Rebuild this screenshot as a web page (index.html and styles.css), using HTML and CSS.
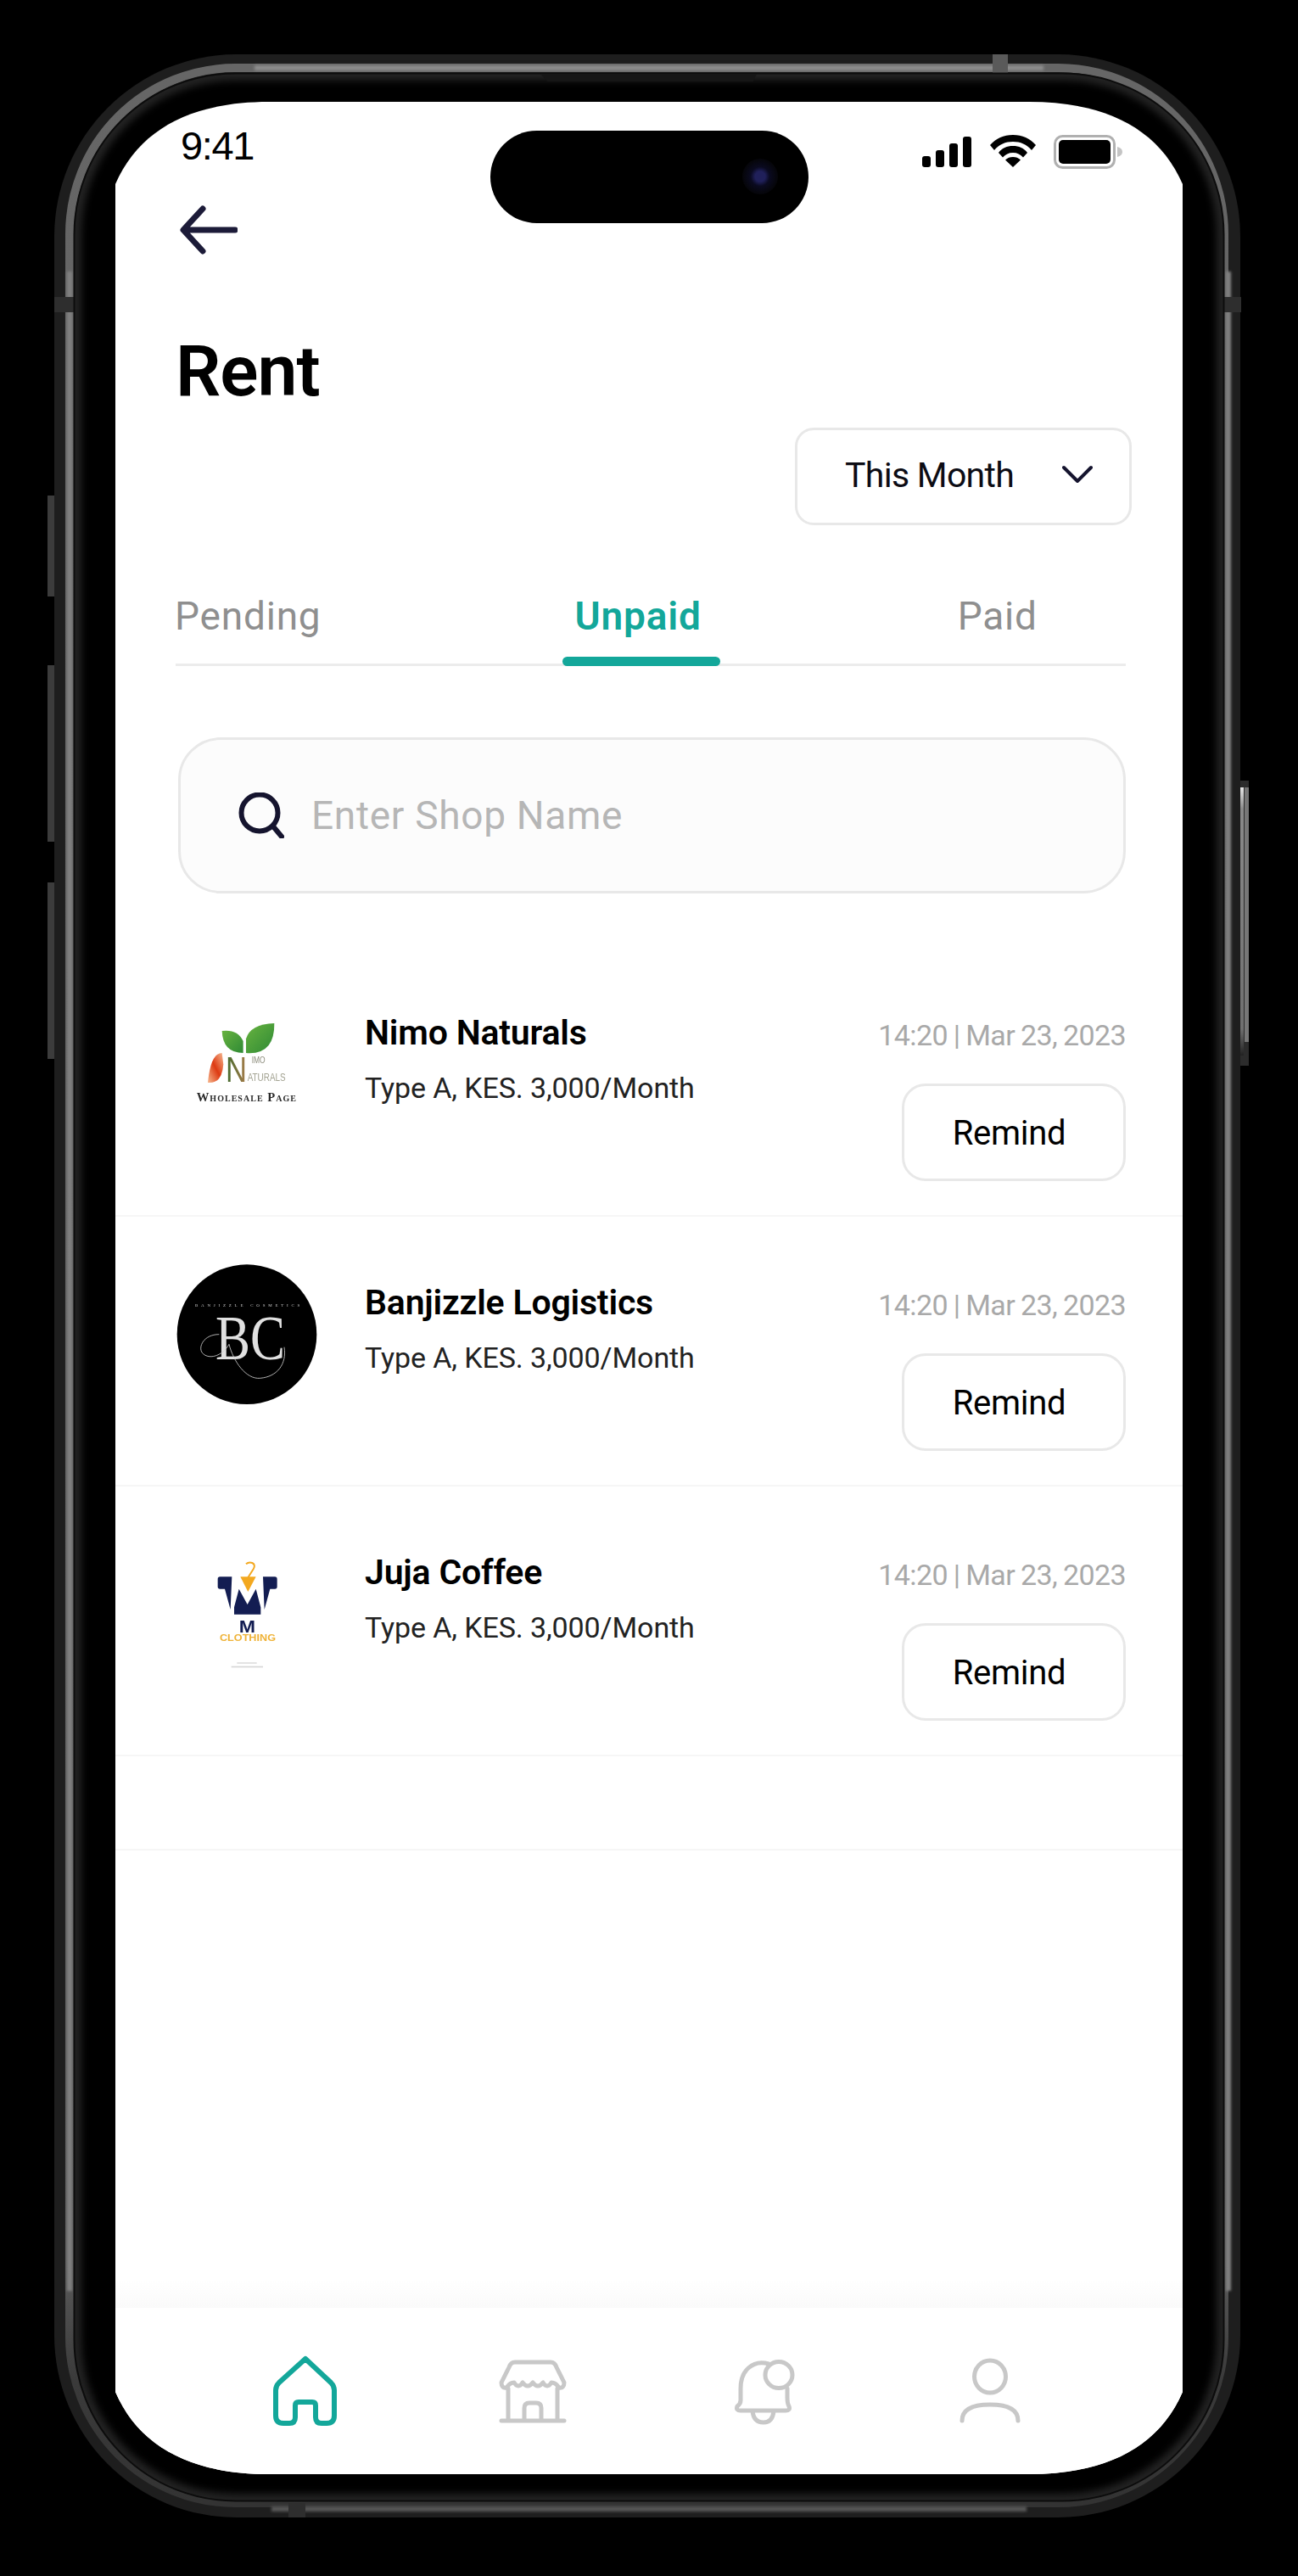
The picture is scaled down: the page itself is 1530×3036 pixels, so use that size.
FILE: index.html
```html
<!DOCTYPE html>
<html lang="en">
<head>
<meta charset="utf-8">
<title>Rent</title>
<link rel="stylesheet" href="styles.css">
</head>
<body>
<svg class="device" viewBox="0 0 1530 3036" aria-hidden="true">
  <defs>
    <filter id="soft" x="-5%" y="-5%" width="110%" height="110%"><feGaussianBlur stdDeviation="1.6"/></filter>
    <filter id="glow" x="-5%" y="-5%" width="110%" height="110%"><feGaussianBlur stdDeviation="4"/></filter>
    <linearGradient id="btn" x1="0" y1="0" x2="0" y2="1">
      <stop offset="0" stop-color="#e8e8e8"/><stop offset=".08" stop-color="#8a8a8a"/><stop offset=".9" stop-color="#707070"/><stop offset="1" stop-color="#222"/>
    </linearGradient>
    <linearGradient id="rail" x1="0" y1="0" x2="0" y2="1">
      <stop offset="0" stop-color="#666"/><stop offset=".9" stop-color="#5c5c5c"/><stop offset=".95" stop-color="#3a3a3a"/><stop offset="1" stop-color="#333"/>
    </linearGradient>
  </defs>
  <g class="buttons">
    <rect x="56" y="584" width="14" height="119" fill="#3c3c3c"/><rect x="64" y="591" width="6" height="100" fill="url(#btn)"/>
    <rect x="56" y="784" width="14" height="208" fill="#3c3c3c"/><rect x="64" y="790" width="6" height="190" fill="url(#btn)"/>
    <rect x="56" y="1040" width="14" height="208" fill="#3c3c3c"/><rect x="64" y="1046" width="6" height="190" fill="url(#btn)"/>
    <rect x="1458" y="920" width="14" height="336" fill="#2c2c2c"/><rect x="1460" y="928" width="6" height="316" fill="url(#btn)"/><rect x="1467" y="928" width="5" height="300" fill="#777"/>
  </g>
  <rect x="64" y="64" width="1398" height="2903" rx="215" fill="#1e1e1e"/>
  <rect x="82" y="80" width="1361" height="2870" rx="196" fill="none" stroke="url(#rail)" stroke-width="10"/>
  <g filter="url(#soft)" stroke-width="6" fill="none">
    <path d="M300 80H1230" stroke="#8c8c8c"/>
    <path d="M82 320V2700" stroke="#808080"/>
    <path d="M1448 320V2700" stroke="#808080"/>
    <path d="M320 2957H1210" stroke="#575757"/>
  </g>
  <g fill="#2e2e2e">
    <rect x="1170" y="64" width="18" height="23" fill="#5a5a5a"/>
    <rect x="64" y="350" width="24" height="18"/>
    <rect x="1442" y="350" width="21" height="18"/>
    <rect x="340" y="2950" width="20" height="17"/>
  </g>
  <rect x="87.500" y="86.500" width="1355" height="2861" rx="190" fill="#222" stroke="#0c0c0c" stroke-width="2"/>
  <rect x="96" y="95" width="1338" height="2844" rx="182" fill="#000" filter="url(#glow)"/>
  <path d="M637 87H892L888 96H645Z" fill="#161616"/>
</svg>

<main class="screen">
  <div class="island"><span class="lens"></span></div>

  <header class="status">
    <span class="clock">9:41</span>
    <div class="status-icons">
      <svg class="ic-signal" viewBox="0 0 58 36"><rect x="0" y="23" width="10" height="13" rx="3"/><rect x="16" y="16" width="10" height="20" rx="3"/><rect x="32" y="8" width="10" height="28" rx="3"/><rect x="48" y="0" width="10" height="36" rx="3"/></svg>
      <svg class="ic-wifi" viewBox="0 0 54 38"><path d="M27 0C16 0 7 4 0 12l5 6C11 11 18 8 27 8s16 3 22 10l5-6C47 4 38 0 27 0Z"/><path d="M27 13c-7 0-13 2.500-17 8l5 5.500C18 23 22 21 27 21s9 2 12 5.500l5-5.500C40 15.500 34 13 27 13Z"/><path d="M27 26c-3.500 0-6.500 1-9 3.500L27 38l9-8.500C33.500 27 30.500 26 27 26Z"/></svg>
      <svg class="ic-battery" viewBox="0 0 82 40"><rect x="1.500" y="1.500" width="70" height="37" rx="9" fill="#fff" stroke="#b0b0b0" stroke-width="3"/><rect x="6" y="6" width="61" height="28" rx="5"/><path d="M75 14c4 1 6 3 6 6s-2 5-6 6Z" fill="#c4c4c4"/></svg>
    </div>
  </header>

  <section class="head">
    <svg class="ic-back" viewBox="0 0 68 58" fill="none"><path d="M65 29H5M27 4 4 29l23 25" stroke="#1c1b38" stroke-width="7" stroke-linecap="round" stroke-linejoin="round"/></svg>
    <h1 class="title">Rent</h1>
    <div class="filter-row">
      <div class="filter">
        <span class="filter-label">This Month</span>
        <svg class="ic-chev" viewBox="0 0 36 22" fill="none"><path d="M2 3l16 16L34 3" stroke="#15142e" stroke-width="4" stroke-linecap="round" stroke-linejoin="round"/></svg>
      </div>
    </div>
    <nav class="tabs">
      <span class="tab tab-pending">Pending</span>
      <span class="tab tab-unpaid">Unpaid</span>
      <span class="tab tab-paid">Paid</span>
    </nav>
    <div class="search">
      <svg class="ic-search" viewBox="0 0 54 54" fill="none"><circle cx="25" cy="24" r="21.500" stroke="#15142e" stroke-width="6"/><path d="M41 40l10 12" stroke="#15142e" stroke-width="6" stroke-linecap="round"/></svg>
      <span class="placeholder">Enter Shop Name</span>
    </div>
  </section>

  <section class="rows">
    <article class="row">
      <svg class="logo" viewBox="0 0 170 170">
        <defs>
          <linearGradient id="leaf" x1="0" y1="0" x2="1" y2="1"><stop offset="0" stop-color="#68b33f"/><stop offset="1" stop-color="#2f8a35"/></linearGradient>
          <linearGradient id="red" x1="1" y1="0" x2="0" y2="1"><stop offset="0" stop-color="#f6bb93"/><stop offset=".5" stop-color="#dd3a12"/><stop offset="1" stop-color="#f7b98f"/></linearGradient>
          <linearGradient id="en" x1="0" y1="0" x2="1" y2="0"><stop offset="0" stop-color="#3f6a2c"/><stop offset="1" stop-color="#a97c4a"/></linearGradient>
        </defs>
        <g transform="translate(-27 -10) scale(.3333)">
          <path d="M245 162Q300 155 320 198V240Q248 240 245 162Z" fill="url(#leaf)"/>
          <path d="M430 135Q345 138 330 190V240Q432 248 430 135Z" fill="url(#leaf)"/>
          <path d="M245 240Q205 240 195 345Q245 350 250 280Z" fill="url(#red)"/>
          <text class="lg-sans" x="258" y="342" font-size="128" textLength="75" lengthAdjust="spacingAndGlyphs" fill="url(#en)">N</text>
          <text class="lg-sans" x="350" y="276" font-size="32" textLength="48" lengthAdjust="spacingAndGlyphs" fill="#8c8c7c">IMO</text>
          <text class="lg-sans" x="335" y="340" font-size="36" textLength="135" lengthAdjust="spacingAndGlyphs" fill="#a3a392">ATURALS</text>
          <text class="lg-serif lg-smallcaps" x="155" y="410" font-size="44" font-weight="700" textLength="352" fill="#2a2a2a">Wholesale Page</text>
        </g>
      </svg>
      <div class="info">
        <h2 class="name">Nimo Naturals</h2>
        <p class="plan">Type A, KES. 3,000/Month</p>
      </div>
      <div class="meta">
        <time class="stamp">14:20 | Mar 23, 2023</time>
        <div class="remind">Remind</div>
      </div>
    </article>

    <article class="row">
      <svg class="logo" viewBox="0 0 170 170">
        <g transform="translate(-17 -18) scale(.3333)">
          <circle cx="303" cy="305" r="247" fill="#000"/>
          <text class="lg-serif" x="120" y="208" font-size="15" textLength="370" fill="#d0d0d0">BANJIZZLE COSMETICS</text>
          <text class="lg-serif" x="192" y="392" font-size="225" textLength="246" lengthAdjust="spacingAndGlyphs" fill="#e0e0e0">BC</text>
          <path d="M205 305C150 305 130 350 145 370 165 395 215 385 240 340 255 400 300 465 350 460 410 455 445 410 435 350" fill="none" stroke="#cfcfcf" stroke-width="2.500"/>
        </g>
      </svg>
      <div class="info">
        <h2 class="name">Banjizzle Logistics</h2>
        <p class="plan">Type A, KES. 3,000/Month</p>
      </div>
      <div class="meta">
        <time class="stamp">14:20 | Mar 23, 2023</time>
        <div class="remind">Remind</div>
      </div>
    </article>

    <article class="row">
      <svg class="logo" viewBox="0 0 170 170">
        <g transform="translate(13 4) scale(.3333)">
          <path d="M110 150Q110 142 118 142H160L155 258 135 185H118Q110 185 110 177Z" fill="#131d52"/>
          <path d="M320 150Q320 142 312 142H270L275 258 295 185H312Q320 185 320 177Z" fill="#131d52"/>
          <path d="M168 275V250L185 185 215 240 245 185 262 250V275Z" fill="#131d52"/>
          <path d="M190 142H245L217 195Z" fill="#f3a81f"/>
          <path d="M217 145 236 115Q245 100 232 93 220 88 210 97" fill="none" stroke="#f3a81f" stroke-width="6"/>
          <text class="lg-sans" x="185" y="338" font-size="60" font-weight="700" textLength="58" lengthAdjust="spacingAndGlyphs" fill="#131d52">M</text>
          <text class="lg-sans" x="117" y="370" font-size="31" font-weight="700" textLength="198" lengthAdjust="spacingAndGlyphs" fill="#efb236">CLOTHING</text>
          <rect x="178" y="445" width="70" height="4" fill="#d6d6d6"/>
          <rect x="158" y="458" width="112" height="5" fill="#d6d6d6"/>
        </g>
      </svg>
      <div class="info">
        <h2 class="name">Juja Coffee</h2>
        <p class="plan">Type A, KES. 3,000/Month</p>
      </div>
      <div class="meta">
        <time class="stamp">14:20 | Mar 23, 2023</time>
        <div class="remind">Remind</div>
      </div>
    </article>

    <div class="row-empty"></div>
  </section>

  <div class="nav-fade"></div>
  <nav class="nav">
    <svg class="nav-ic nav-home" viewBox="0 0 90 85" fill="none"><path d="M45 5 14 33Q10 37 10 42V72Q10 81 19 81H26Q33 81 33 74V60Q33 56 37 56H53Q57 56 57 60V74Q57 81 64 81H70Q79 81 79 72V42Q79 37 75 33Z" stroke-width="6" stroke-linejoin="round"/></svg>
    <svg class="nav-ic nav-shop" viewBox="0 0 90 85" fill="none"><path d="M24 9H66Q71 9 73 15L82 33Q82 40 76 39 72 33 67 33 62 41 57 33 51 41 45 33 39 41 33 33 28 41 23 33 18 33 14 39 8 40 8 33L17 15Q19 9 24 9ZM16 40V78M74 40V78M8 78H82M35 78V63Q35 57 41 57H49Q55 57 55 63V78" stroke-width="5" stroke-linejoin="round" stroke-linecap="round"/></svg>
    <svg class="nav-ic nav-bell" viewBox="0 0 90 85" fill="none"><path d="M50 11Q36 7 26 16 17 24 17 40V54Q17 58 13 61 11 66 17 66H70Q76 66 74 61 72 58 72 50V40" stroke-width="5" stroke-linecap="round" stroke-linejoin="round"/><path d="M31 66Q32 80 44 80 55 80 56 66" stroke-width="5"/><ellipse cx="62" cy="24" rx="16" ry="15.500" stroke-width="5" fill="#fff"/></svg>
    <svg class="nav-ic nav-user" viewBox="0 0 90 85" fill="none"><ellipse cx="46" cy="26" rx="18.500" ry="19" stroke-width="5"/><path d="M13 78Q13 59 46 59 79 59 79 78" stroke-width="5" stroke-linecap="round"/></svg>
  </nav>
</main>
</body>
</html>
```

FILE: styles.css
```css
* { box-sizing: border-box; }
html, body { margin: 0; padding: 0; background: #000; }
body {
  position: relative;
  width: 1530px;
  height: 3036px;
  padding: 120px 136px;
  overflow: hidden;
  font-family: Roboto, "Liberation Sans", sans-serif;
  color: #000;
}
h1, h2, p { margin: 0; font: inherit; }

.device { position: absolute; left: 0; top: 0; width: 1530px; height: 3036px; }

.screen {
  position: relative;
  display: flex;
  flex-direction: column;
  width: 1258px;
  height: 2796px;
  background: #fff;
  clip-path: path("M0 97C28 32 90 0 181 0H1077C1168 0 1230 32 1258 97V2699C1230 2764 1168 2796 1077 2796H181C90 2796 28 2764 0 2699Z");
}

.island {
  position: absolute;
  left: 442px;
  top: 34px;
  width: 375px;
  height: 109px;
  border-radius: 55px;
  background: #000;
}
.lens {
  position: absolute;
  left: 297px;
  top: 33px;
  width: 42px;
  height: 42px;
  border-radius: 50%;
  background: radial-gradient(circle, #20205a 0 20%, #0a0a20 38%, #06060c 65%, #000 100%);
}

/* status bar */
.status {
  display: flex;
  flex: none;
  justify-content: space-between;
  align-items: flex-start;
  height: 100px;
  padding: 0 69px 0 77px;
}
.clock {
  padding-top: 24px;
  font-family: "Liberation Sans", sans-serif;
  font-size: 47px;
  line-height: 56px;
  letter-spacing: -1.400px;
}
.status-icons { display: flex; align-items: flex-start; gap: 21px; padding: 39px 0 0; margin-right: 1px; }
.ic-signal { width: 58px; height: 36px; margin: 2px 1px 0 0; }
.ic-wifi { width: 54px; height: 38px; }
.ic-battery { width: 82px; height: 40px; }

/* heading */
.head { flex: none; padding: 0 67px 0 71px; }
.ic-back { display: block; width: 68px; height: 58px; margin: 22px 0 0 5px; }
.title {
  margin-top: 88px;
  font-size: 84px;
  line-height: 100px;
  font-weight: 600;
  letter-spacing: -1px;
}
.filter-row { display: flex; justify-content: flex-end; margin: 16px -7px 0 0; }
.filter {
  display: flex;
  align-items: center;
  width: 397px;
  height: 115px;
  padding: 0 43px 0 56px;
  border: 3px solid #e8e8e8;
  border-radius: 22px;
  justify-content: space-between;
}
.filter-label { font-size: 41px; line-height: 50px; letter-spacing: -.7px; color: #0c0c14; position: relative; top: -2px; }
.ic-chev { width: 36px; height: 22px; position: relative; top: -3px; }

/* tabs */
.tabs {
  display: flex;
  height: 87px;
  margin-top: 79px;
  border-bottom: 3px solid #ececec;
  font-size: 46px;
  line-height: 56px;
  letter-spacing: .8px;
}
.tab { position: relative; color: #8f8f8f; }
.tab-pending { margin-left: -1px; }
.tab-unpaid { margin-left: 299px; color: #13a79a; font-weight: 600; }
.tab-unpaid::after {
  content: "";
  position: absolute;
  left: -15px;
  right: -22px;
  top: 76px;
  height: 11px;
  border-radius: 6px;
  background: #13a79a;
}
.tab-paid { margin-left: 302px; }

/* search */
.search {
  display: flex;
  align-items: center;
  height: 184px;
  margin: 84px 0 0 3px;
  padding-left: 68px;
  border: 3px solid #e8e8e8;
  border-radius: 50px;
  background: #fcfcfc;
}
.ic-search { width: 54px; height: 54px; }
.placeholder { margin-left: 32px; font-size: 46px; line-height: 56px; letter-spacing: .7px; color: #b6b6b6; }

/* rows */
.rows { flex: none; margin-top: 63px; }
.row {
  display: flex;
  align-items: flex-start;
  height: 318px;
  padding: 55px 67px 0 71px;
  border-bottom: 2px solid #f6f6f6;
}
.row-empty { height: 111px; border-bottom: 2px solid #f6f6f6; }
.logo { flex: none; width: 170px; height: 170px; filter: blur(.5px); }
.lg-sans { font-family: "Liberation Sans", sans-serif; }
.lg-serif { font-family: "Liberation Serif", serif; }
.lg-smallcaps { font-variant: small-caps; }
.info { margin-left: 53px; padding-top: 21px; }
.name { font-size: 41px; line-height: 50px; font-weight: 600; letter-spacing: -.2px; }
.plan { margin-top: 20px; font-size: 34px; line-height: 40px; letter-spacing: -.1px; color: #222; }
.meta { display: flex; flex-direction: column; align-items: flex-end; margin-left: auto; padding-top: 29px; }
.stamp { font-size: 34px; line-height: 40px; letter-spacing: -.6px; word-spacing: -1px; color: #a9a9a9; white-space: nowrap; }
.remind {
  display: flex;
  align-items: center;
  justify-content: center;
  width: 264px;
  height: 115px;
  margin-top: 37px;
  padding: 2px 11px 0 0;
  border: 3px solid #e8e8e8;
  border-radius: 28px;
  font-size: 40px;
  font-weight: 450;
  line-height: 50px;
  letter-spacing: -.3px;
}

/* bottom nav */
.nav-fade {
  flex: none;
  height: 33px;
  margin-top: auto;
  background: linear-gradient(#fff, #fafafa);
}
.nav {
  display: flex;
  flex: none;
  align-items: flex-start;
  height: 196px;
  padding: 55px 0 0 179px;
  background: #fff;
}
.nav-ic { width: 90px; height: 85px; stroke: #c8c8c8; }
.nav-home { stroke: #13a79a; }
.nav-shop { margin-left: 178px; }
.nav-bell { margin-left: 183px; }
.nav-user { margin-left: 175px; }
```
